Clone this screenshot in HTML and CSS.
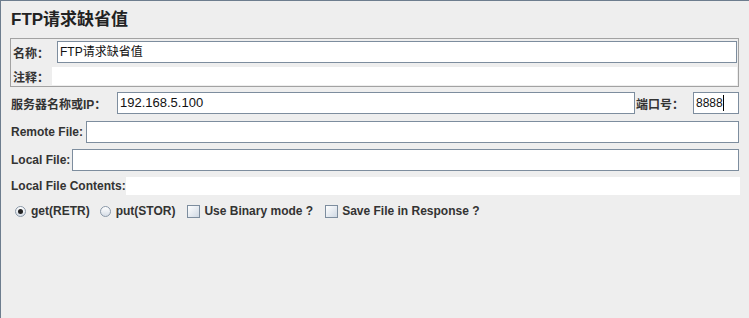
FILE: index.html
```html
<!DOCTYPE html>
<html lang="zh-CN">
<head>
  <meta charset="UTF-8">
  <title>FTP请求缺省值</title>
  <link rel="stylesheet" href="styles.css">
</head>
<body>
  <div class="frame">
    <h2 class="title">FTP请求缺省值</h2>

    <div class="name-box">
      <div class="row name-row">
        <span class="label name-label">名称：</span>
        <div class="field">FTP请求缺省值</div>
      </div>
      <div class="row comment-row">
        <span class="label comment-label">注释：</span>
        <div class="field plain"></div>
      </div>
    </div>

    <div class="row server-row">
      <span class="label server-label">服务器名称或IP：</span>
      <div class="field ip">192.168.5.100</div>
      <span class="label port-label">端口号：</span>
      <div class="field port">8888<span class="caret"></span></div>
    </div>

    <div class="row file-row">
      <span class="label remote-label">Remote File:</span>
      <div class="field"></div>
    </div>

    <div class="row file-row">
      <span class="label local-label">Local File:</span>
      <div class="field"></div>
    </div>

    <div class="row contents-row">
      <span class="label contents-label">Local File Contents:</span>
      <div class="field plain"></div>
    </div>

    <div class="options">
      <label class="opt opt-get"><span class="radio checked"></span>get(RETR)</label>
      <label class="opt opt-put"><span class="radio"></span>put(STOR)</label>
      <label class="opt opt-binary"><span class="check"></span>Use Binary mode ?</label>
      <label class="opt"><span class="check"></span>Save File in Response ?</label>
    </div>
  </div>
</body>
</html>
```

FILE: styles.css
```css
* {
  box-sizing: border-box;
}
body {
  margin: 0;
  background: #eeeeee;
  font-family: "Liberation Sans", Arial, "Noto Sans CJK SC", sans-serif;
  color: #333333;
}
.frame {
  height: 318px;
  border-top: 1px solid #6d7d8e;
  border-left: 1px solid #6d7d8e;
  padding: 0 10px 0 10px;
}
.title {
  margin: 9px 0 0 0;
  height: 20px;
  line-height: 20px;
  font-size: 17px;
  font-weight: bold;
  color: #222222;
}
.label {
  font-size: 12px;
  font-weight: bold;
  white-space: nowrap;
}
.row {
  display: flex;
  align-items: center;
}
.field {
  flex: 1;
  height: 22px;
  line-height: 20px;
  background: #ffffff;
  border: 1px solid #7d8d9e;
  font-size: 12px;
  color: #111111;
  padding-left: 2px;
}
.field.ip {
  font-size: 13px;
}
.field.plain {
  height: 18px;
  border: none;
}
.name-box {
  margin: 8px 0 0 -1px;
  border: 1px solid #a2a2a2;
  padding: 2px 1px 1px 2px;
}
.name-label {
  width: 44px;
}
.comment-row {
  margin-top: 4px;
}
.comment-label {
  width: 39px;
}
.server-row {
  margin-top: 5px;
}
.server-label {
  width: 106px;
}
.port-label {
  width: 58px;
  padding-left: 1px;
}
.field.port {
  flex: none;
  width: 46px;
}
.caret {
  display: inline-block;
  width: 1px;
  height: 16px;
  background: #000000;
  vertical-align: middle;
  margin-top: -2px;
}
.file-row {
  margin-top: 7px;
}
.file-row + .file-row {
  margin-top: 6px;
}
.remote-label {
  width: 75px;
}
.local-label {
  width: 61px;
}
.contents-row {
  margin-top: 6px;
  margin-right: -1px;
}
.contents-label {
  width: 115px;
}
.options {
  display: flex;
  align-items: center;
  margin-top: 8px;
  padding-left: 4px;
  height: 16px;
}
.opt {
  display: flex;
  align-items: center;
  font-size: 12px;
  font-weight: bold;
  color: #333333;
}
.opt-get {
  margin-right: 10px;
}
.opt-put {
  margin-right: 12px;
}
.opt-binary {
  margin-right: 12px;
}
.radio {
  width: 11px;
  height: 11px;
  border-radius: 50%;
  border: 1px solid #8a98a8;
  background: linear-gradient(#ffffff, #d6dde6);
  margin-right: 5px;
  position: relative;
}
.radio.checked::after {
  content: "";
  position: absolute;
  left: 2px;
  top: 2px;
  width: 5px;
  height: 5px;
  border-radius: 50%;
  background: #222222;
}
.check {
  width: 13px;
  height: 13px;
  border: 1px solid #7d8d9e;
  background: linear-gradient(135deg, #ffffff, #cfd8e3);
  margin-right: 4px;
}
```
